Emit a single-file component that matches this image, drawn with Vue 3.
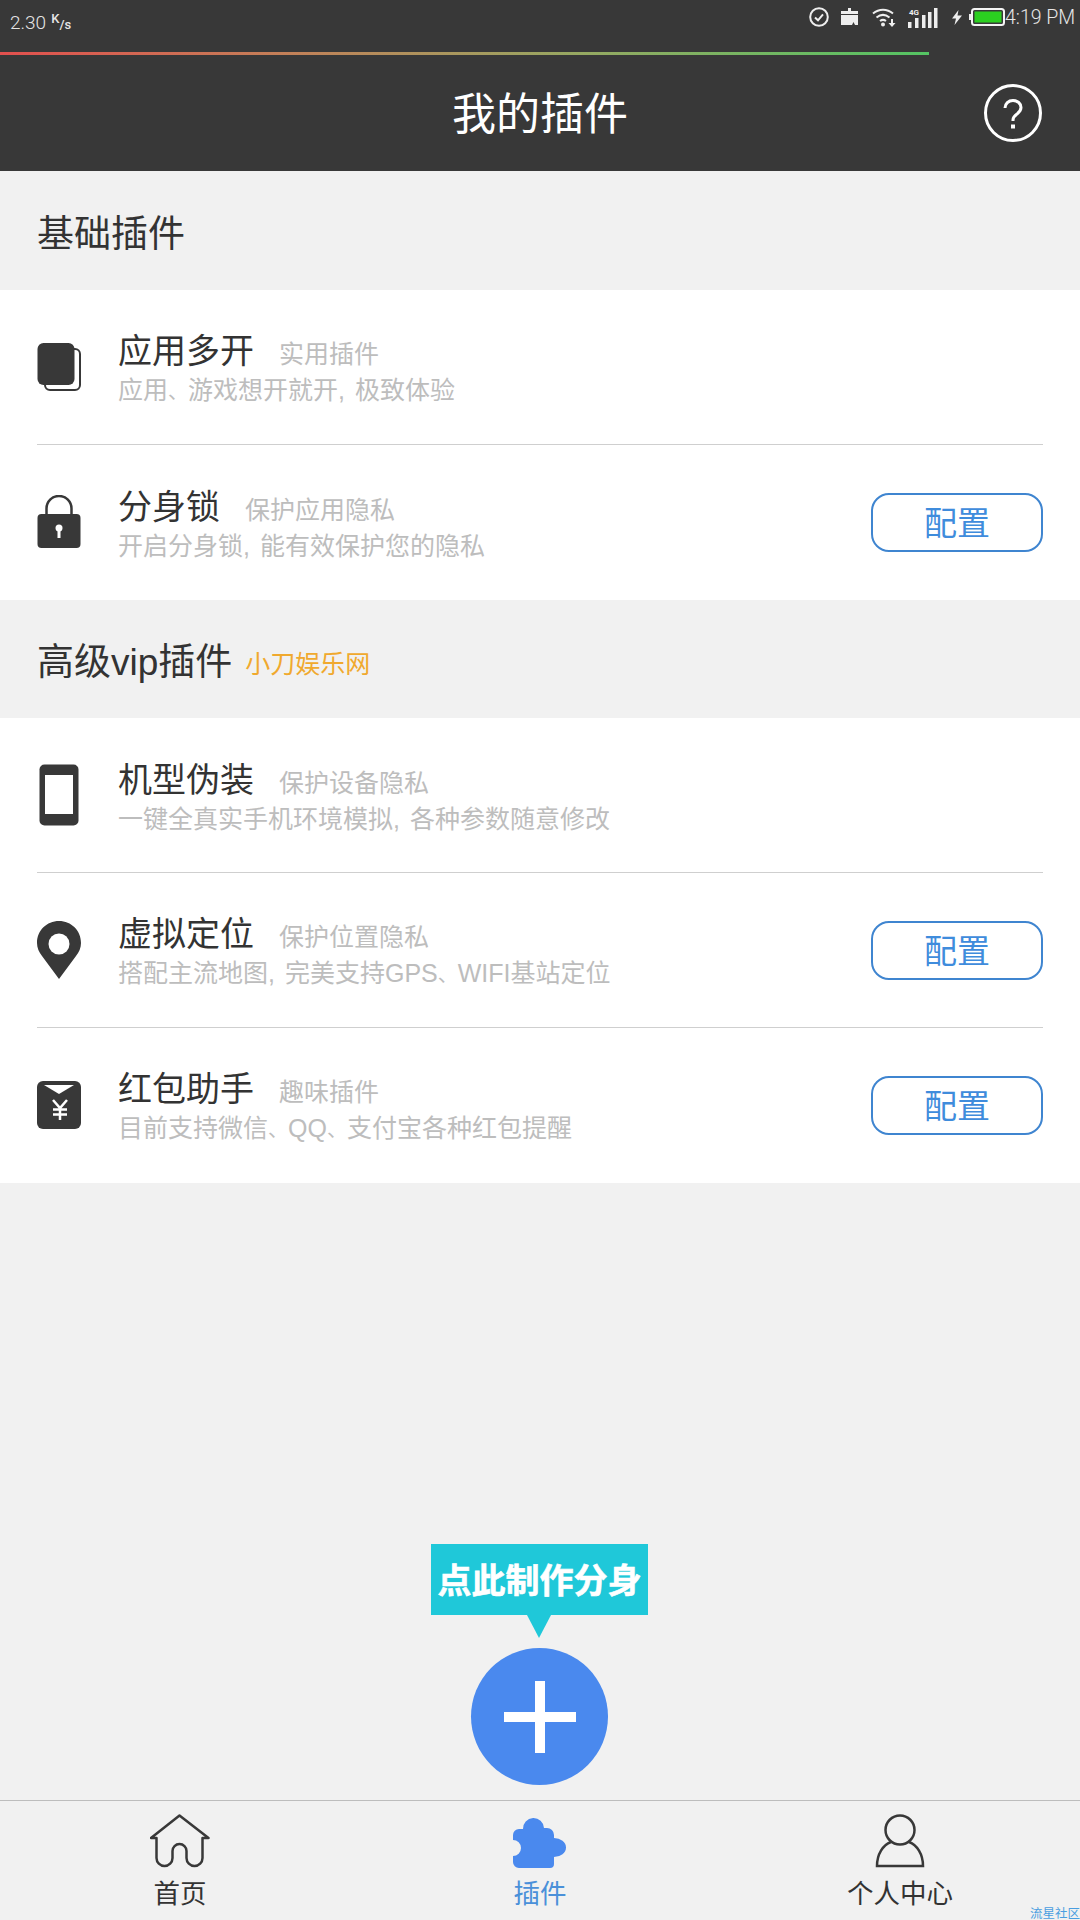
<script setup>
const basic = [
  { icon: 'copy', title: '应用多开', sub: '实用插件', desc: '应用、游戏想开就开,极致体验' },
  { icon: 'lock', title: '分身锁', sub: '保护应用隐私', desc: '开启分身锁,能有效保护您的隐私', config: true }
]

const vip = [
  { icon: 'phone', title: '机型伪装', sub: '保护设备隐私', desc: '一键全真实手机环境模拟,各种参数随意修改' },
  { icon: 'pin', title: '虚拟定位', sub: '保护位置隐私', desc: '搭配主流地图,完美支持GPS、WIFI基站定位', config: true },
  { icon: 'packet', title: '红包助手', sub: '趣味插件', desc: '目前支持微信、QQ、支付宝各种红包提醒', config: true }
]

const sections = [
  { name: '基础插件', items: basic },
  { name: '高级vip插件', tag: '小刀娱乐网', items: vip }
]

// punctuation sits in a narrower cell than the CJK font gives it
const parts = (text) => text.split(/([、,])/)
</script>

<template>
  <div class="page">
    <header class="header">
      <div class="status">
        <div class="speed">2.30<span class="unit"><span class="unit-k">K</span>/s</span></div>
        <div class="status-icons">
          <svg class="si-check" width="20" height="20" viewBox="0 0 20 20">
            <circle cx="10" cy="10" r="8.800" fill="none" stroke="#eee" stroke-width="2" />
            <path d="M6 10.500l3 2.800 5-6" fill="none" stroke="#eee" stroke-width="2" />
          </svg>
          <svg class="si-case" width="17" height="17" viewBox="0 0 17 17">
            <path d="M7 0h3v3h7v3H0V3h7zM0 7h17v10h-3l-1.500-3-1.500 3H0z" fill="#eee" />
          </svg>
          <svg class="si-wifi" width="24" height="19" viewBox="0 0 24 19">
            <path d="M1 5.500C7 .5 15 .5 21 5.500M4.500 9.500c4-3.200 9-3.200 13 0M8 13c2-1.500 4-1.500 6 0" fill="none" stroke="#eee" stroke-width="2" />
            <circle cx="11" cy="16.500" r="2" fill="#eee" />
            <path d="M19 11v4h-2.500l3.500 4 3.500-4H21v-4z" fill="#eee" />
          </svg>
          <svg class="si-signal" width="30" height="20" viewBox="0 0 30 20">
            <rect x="0" y="14" width="3.500" height="6" fill="#eee" />
            <rect x="7" y="10" width="3.500" height="10" fill="#eee" />
            <rect x="14" y="7" width="3.500" height="13" fill="#eee" />
            <rect x="20" y="4" width="3.500" height="16" fill="#eee" />
            <rect x="26" y="0" width="3.500" height="20" fill="#eee" />
            <text x="1" y="7" class="si-4g">4G</text>
          </svg>
          <svg class="si-bolt" width="10" height="15" viewBox="0 0 10 15">
            <path d="M6.500 0L0 8.500h4L2.500 15 10 5.500H5.500z" fill="#eee" />
          </svg>
          <svg class="si-battery" width="36" height="18" viewBox="0 0 36 18">
            <rect x="0" y="6" width="3" height="6" fill="#eee" />
            <rect x="3" y="1" width="32" height="16" rx="2.500" fill="#383838" stroke="#f4f4f4" stroke-width="2" />
            <rect x="5.500" y="3.500" width="27" height="11" fill="#2bd020" />
          </svg>
        </div>
        <div class="time">4:19 PM</div>
      </div>
      <div class="progress"></div>
      <div class="titlebar">
        <h1 class="page-title">我的插件</h1>
        <svg class="help" width="60" height="60" viewBox="0 0 60 60">
          <circle cx="30" cy="30" r="27.500" fill="none" stroke="#fff" stroke-width="3" />
          <path d="M22 25c0-4.500 3.500-7.500 8-7.500s8 3 8 7c0 3-1.500 4.500-4 6.500-2.500 1.800-4 3-4 6v1" fill="none" stroke="#fff" stroke-width="3" />
          <rect x="28" y="41.500" width="4" height="4" fill="#fff" />
        </svg>
      </div>
    </header>

    <main class="content">
      <section v-for="section in sections" :key="section.name">
        <div class="section-head">
          <span class="section-name">{{ section.name }}</span>
          <span v-if="section.tag" class="section-tag">{{ section.tag }}</span>
        </div>
        <div class="list">
          <div v-for="item in section.items" :key="item.title" class="row">
            <div class="row-icon">
              <svg v-if="item.icon === 'copy'" width="44" height="48" viewBox="0 0 44 48">
                <rect x="8" y="6" width="35" height="41" rx="5" fill="#fff" stroke="#383838" stroke-width="2" />
                <rect x="0.500" y="0" width="37" height="42" rx="6" fill="#383838" />
              </svg>
              <svg v-else-if="item.icon === 'lock'" width="44" height="54" viewBox="0 0 44 54">
                <path d="M9.500 22V13.500a12.500 12.500 0 0 1 25 0V22" fill="none" stroke="#383838" stroke-width="2.500" />
                <rect x="0.500" y="19" width="43" height="34" rx="4" fill="#383838" />
                <circle cx="22" cy="33" r="3.500" fill="#fff" />
                <rect x="20.500" y="34" width="3" height="9" fill="#fff" />
              </svg>
              <svg v-else-if="item.icon === 'phone'" width="40" height="62" viewBox="0 0 40 62">
                <rect x="0.500" y="0.500" width="39" height="61" rx="5" fill="#383838" />
                <rect x="6" y="11" width="28" height="39" fill="#fff" />
              </svg>
              <svg v-else-if="item.icon === 'pin'" width="44" height="58" viewBox="0 0 44 58">
                <path d="M22 0C9.800 0 0 9.500 0 22c0 5 2 9 5 13l17 23 17-23c3-4 5-8 5-13C44 9.500 34.200 0 22 0z" fill="#383838" />
                <circle cx="22" cy="23" r="10.500" fill="#fff" />
              </svg>
              <svg v-else width="44" height="48" viewBox="0 0 44 48">
                <rect x="0" y="0" width="44" height="48" rx="6" fill="#383838" />
                <path d="M7 4h30L22 13z" fill="#fff" />
                <path d="M16 19l7 8 7-8M23 27v12M16 28.500h14M16 33.500h14" fill="none" stroke="#fff" stroke-width="2.500" />
              </svg>
            </div>
            <div class="row-text">
              <div class="row-head">
                <span class="row-title">{{ item.title }}</span>
                <span class="row-sub">{{ item.sub }}</span>
              </div>
              <div class="row-desc">
                <template v-for="(part, i) in parts(item.desc)" :key="i">
                  <span v-if="part === '、'" class="mark-dun">{{ part }}</span>
                  <span v-else-if="part === ','" class="mark-comma">{{ part }}</span>
                  <template v-else>{{ part }}</template>
                </template>
              </div>
            </div>
            <button v-if="item.config" class="config">配置</button>
          </div>
        </div>
      </section>
    </main>

    <div class="fab-wrap">
      <div class="tip">点此制作分身</div>
      <div class="fab">
        <svg width="72" height="72" viewBox="0 0 72 72">
          <path d="M31 0h10v31h31v10H41v31H31V41H0V31h31z" fill="#fff" />
        </svg>
      </div>
    </div>

    <nav class="tabs">
      <div class="tab">
        <svg width="60" height="56" viewBox="0 0 60 56">
          <path d="M1 24L29.500 1.500 58.500 24H52.500V44a8 8 0 0 1-16 0V37a7 7 0 0 0-14 0V44a8 8 0 0 1-16 0V24z" fill="none" stroke="#383838" stroke-width="2.500" stroke-linejoin="round" />
        </svg>
        <span class="tab-label">首页</span>
      </div>
      <div class="tab tab-active">
        <svg width="54" height="56" viewBox="0 0 54 56">
          <path d="M6 15h4a10.500 10.500 0 0 1 21-1h3a7 7 0 0 1 7 7v3a12 9.500 0 0 1 0 19v7a4 4 0 0 1-4 4H6a6 6 0 0 1-6-6V42a8 8 0 0 0 0-16V21a6 6 0 0 1 6-6z" fill="#4a89ee" />
        </svg>
        <span class="tab-label">插件</span>
      </div>
      <div class="tab">
        <svg width="54" height="56" viewBox="0 0 54 56">
          <circle cx="27" cy="16" r="14.500" fill="none" stroke="#383838" stroke-width="2.500" />
          <path d="M18 28C10 31 4 40 4 52H50C50 40 44 31 36 28" fill="none" stroke="#383838" stroke-width="2.500" />
        </svg>
        <span class="tab-label">个人中心</span>
      </div>
    </nav>

    <div class="watermark">流星社区</div>
  </div>
</template>

<style>
html,
body {
  margin: 0;
  background: #f1f1f1;
}
</style>

<style scoped>
.page {
  position: relative;
  width: 1080px;
  height: 1920px;
  overflow: hidden;
  display: flex;
  flex-direction: column;
  background: #f1f1f1;
  font-family: "Liberation Sans", "Noto Sans CJK SC", sans-serif;
  color: #333;
}

.header {
  height: 171px;
  background: #383838;
  flex-shrink: 0;
}

.status {
  height: 52px;
  padding-left: 10px;
  padding-right: 5px;
  display: flex;
  align-items: flex-start;
  box-sizing: border-box;
  color: #e6e6e6;
  font-family: Roboto, sans-serif;
  font-weight: 300;
}

.speed {
  font-size: 19px;
  line-height: 38px;
}

.unit {
  font-size: 13px;
  font-weight: 500;
  margin-left: 5px;
}

.unit-k {
  vertical-align: 6px;
}

.status-icons {
  margin-left: auto;
  display: flex;
  align-items: flex-start;
  height: 30px;
}

.si-check {
  margin-top: 7px;
}

.si-case {
  margin-top: 8px;
  margin-left: 12px;
}

.si-wifi {
  margin-top: 8px;
  margin-left: 14px;
}

.si-signal {
  margin-top: 8px;
  margin-left: 12px;
}

.si-bolt {
  margin-top: 10px;
  margin-left: 14px;
}

.si-battery {
  margin-top: 8px;
  margin-left: 7px;
}

.si-4g {
  font-size: 8px;
  font-weight: 700;
  fill: #eee;
}

.time {
  font-size: 19.500px;
  line-height: 36px;
  width: 70px;
  white-space: nowrap;
}

.progress {
  width: 929px;
  height: 3px;
  background: linear-gradient(90deg, #e2504e 0%, #c47f58 30%, #97a862 62%, #54c463 100%);
}

.titlebar {
  position: relative;
  height: 116px;
  display: flex;
  align-items: center;
  justify-content: center;
}

.page-title {
  margin: 4px 0 0;
  font-size: 44px;
  font-weight: 400;
  color: #fff;
  line-height: 60px;
}

.help {
  position: absolute;
  right: 37px;
  top: 28px;
}

.section-head {
  height: 119px;
  padding-left: 37px;
  display: flex;
  align-items: center;
}

section + section .section-head {
  height: 118px;
}

.section-name {
  font-size: 37px;
  color: #333;
}

.section-tag {
  margin-left: 13px;
  margin-top: 6px;
  font-size: 25px;
  color: #f0a92e;
}

.list {
  background: #fff;
  padding: 0 37px;
}

.row {
  height: 154px;
  display: flex;
  align-items: center;
  border-bottom: 1px solid #cfcfcf;
}

.row:last-child {
  border-bottom-color: transparent;
}

.row-icon {
  width: 81px;
  display: flex;
  justify-content: center;
  flex-shrink: 0;
  padding-right: 37px;
  box-sizing: border-box;
}

.row-text {
  flex: 1;
  padding-top: 3px;
}

.row-head {
  display: flex;
  align-items: baseline;
  height: 44.500px;
}

.row-title {
  font-size: 34px;
  line-height: 48px;
  color: #333;
}

.row-sub {
  margin-left: 25px;
  font-size: 25px;
  color: #bdbdbd;
}

.row-desc {
  font-size: 25px;
  line-height: 36px;
  color: #bdbdbd;
  white-space: nowrap;
}

.mark-dun {
  font-size: 20px;
}

.mark-comma {
  padding-right: 10px;
}

.config {
  width: 172px;
  height: 59px;
  padding: 2px 0 0;
  border: 2px solid #3f85d0;
  border-radius: 18px;
  background: #fff;
  color: #3f8cdc;
  font-family: inherit;
  font-size: 33px;
  line-height: 1;
}

.content {
  flex: 1;
}

.fab-wrap {
  position: absolute;
  left: 0;
  right: 1px;
  top: 1544px;
  display: flex;
  flex-direction: column;
  align-items: center;
}

.tip {
  position: relative;
  width: 217px;
  height: 71px;
  background: #1fc8d9;
  color: #fff;
  font-size: 34px;
  font-weight: 700;
  line-height: 75px;
  text-align: center;
  white-space: nowrap;
  -webkit-text-stroke: 0.6px #fff;
}

.tip::after {
  content: "";
  position: absolute;
  left: 96px;
  top: 71px;
  border-left: 12px solid transparent;
  border-right: 12px solid transparent;
  border-top: 23px solid #1fc8d9;
}

.fab {
  margin-top: 33px;
  width: 137px;
  height: 137px;
  border-radius: 50%;
  background: #4a89ee;
  display: flex;
  align-items: center;
  justify-content: center;
}

.tabs {
  height: 120px;
  flex-shrink: 0;
  display: flex;
  border-top: 1px solid #bdbdbd;
  box-sizing: border-box;
}

.tab {
  flex: 1;
  display: flex;
  flex-direction: column;
  align-items: center;
  padding-top: 13px;
}

.tab-label {
  font-size: 26.500px;
  line-height: 36px;
  margin-top: 6px;
  color: #333;
}

.tab-active .tab-label {
  color: #4a90d9;
}

.watermark {
  position: absolute;
  right: 0;
  bottom: -1px;
  font-size: 12.500px;
  line-height: 14px;
  color: #4a9ee0;
}
</style>
